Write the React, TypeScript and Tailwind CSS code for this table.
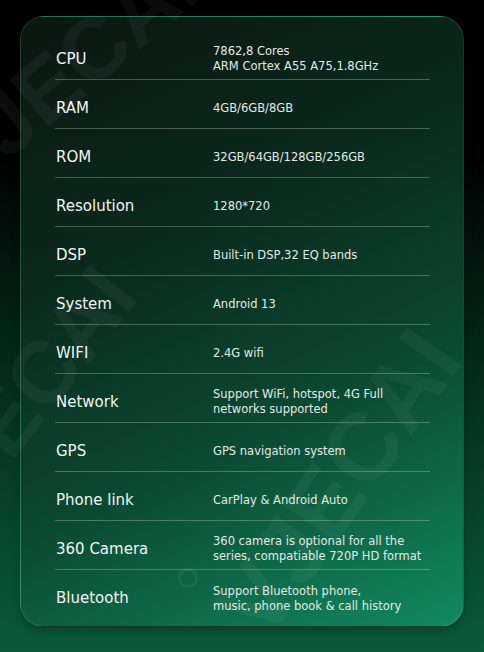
import React from 'react';

const specs: { label: string; value: string[] }[] = [
  { label: 'CPU', value: ['7862,8 Cores', 'ARM Cortex A55 A75,1.8GHz'] },
  { label: 'RAM', value: ['4GB/6GB/8GB'] },
  { label: 'ROM', value: ['32GB/64GB/128GB/256GB'] },
  { label: 'Resolution', value: ['1280*720'] },
  { label: 'DSP', value: ['Built-in DSP,32 EQ bands'] },
  { label: 'System', value: ['Android 13'] },
  { label: 'WIFI', value: ['2.4G wifi'] },
  { label: 'Network', value: ['Support WiFi, hotspot, 4G Full', 'networks supported'] },
  { label: 'GPS', value: ['GPS navigation system'] },
  { label: 'Phone link', value: ['CarPlay & Android Auto'] },
  { label: '360 Camera', value: ['360 camera is optional for all the', 'series, compatiable 720P HD format'] },
  { label: 'Bluetooth', value: ['Support Bluetooth phone,', 'music, phone book & call history'] },
];

function Watermark({ className }: { className: string }) {
  return (
    <div
      className={`absolute pointer-events-none select-none whitespace-nowrap font-bold text-white/[0.045] leading-none font-['Liberation_Sans',sans-serif] ${className}`}
    >
      VJECAI
    </div>
  );
}

export default function App() {
  return (
    <div className="relative w-[484px] h-[652px] overflow-hidden bg-[linear-gradient(180deg,#000000_0%,#010302_25%,#04291b_55%,#0a5a3d_100%)] pt-[16px] px-[20px] font-['DejaVu_Sans',sans-serif]">
      <div className="relative h-[611px] rounded-[24px] border border-white/10 bg-[linear-gradient(155deg,#0a1611_0%,#0a2a1d_35%,#0b4a32_65%,#128a61_100%)] pl-[34px] pr-[33px] pt-[14px] shadow-[0_4px_10px_rgba(0,0,0,0.25)]">
        {specs.map((s, i) => (
          <div
            key={s.label}
            className={`grid grid-cols-[158px_1fr] items-center h-[49px] pt-[8px] ${i < specs.length - 1 ? 'border-b border-white/25' : ''}`}
          >
            <div className="text-[15px] text-[#f2f5f3] pl-px">{s.label}</div>
            <div className="text-[11.5px] leading-[15px] text-[#e3e9e6]">
              {s.value.map((v) => (
                <div key={v}>{v}</div>
              ))}
            </div>
          </div>
        ))}
      </div>

      <Watermark className="text-[88px] left-[-95px] top-[30px] -rotate-[40deg]" />
      <Watermark className="text-[88px] left-[-140px] top-[360px] -rotate-[52deg]" />
      <Watermark className="text-[96px] left-[165px] top-[435px] -rotate-[55deg]" />
      <div className="absolute left-[178px] top-[568px] w-[20px] h-[20px] rounded-full border-[3px] border-white/[0.06]" />
    </div>
  );
}
